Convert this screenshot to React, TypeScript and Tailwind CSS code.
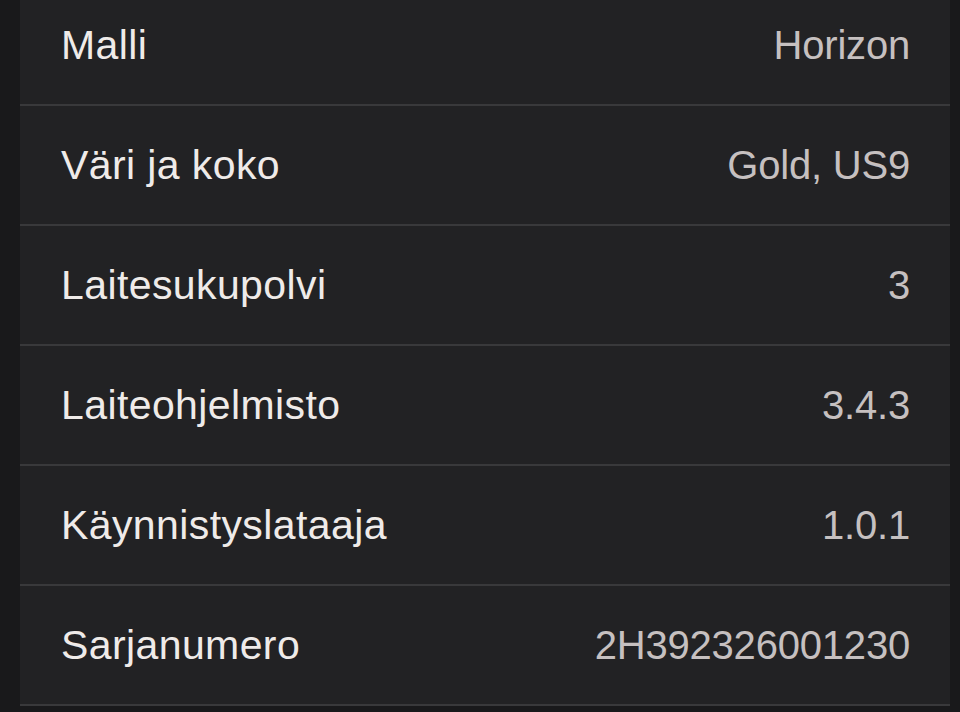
const rows = [
  { label: 'Malli', value: 'Horizon' },
  { label: 'Väri ja koko', value: 'Gold, US9' },
  { label: 'Laitesukupolvi', value: '3' },
  { label: 'Laiteohjelmisto', value: '3.4.3' },
  { label: 'Käynnistyslataaja', value: '1.0.1' },
  { label: 'Sarjanumero', value: '2H392326001230' },
];

export default function App() {
  return (
    <div className="h-[712px] w-[960px] overflow-hidden bg-[#19191b] pl-[20px] pr-[10px] font-['Liberation_Sans',Arial,sans-serif]">
      <div className="-mt-[14px] bg-[#222224]">
        {rows.map((row) => (
          <div
            key={row.label}
            className="flex h-[120px] items-center justify-between border-b-2 border-[#39393b] pl-[41px] pr-[40px] leading-none"
          >
            <span className="text-[41px] tracking-[0.4px] text-[#efebe9]">{row.label}</span>
            <span className="text-[40px] tracking-[-0.2px] text-[#c6c0c0]">{row.value}</span>
          </div>
        ))}
      </div>
    </div>
  );
}
